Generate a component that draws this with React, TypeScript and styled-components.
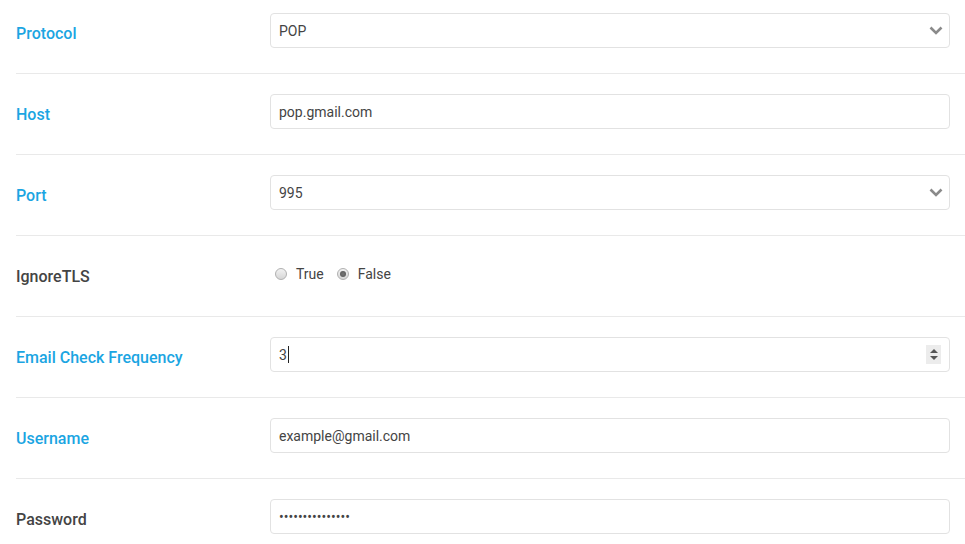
import React from "react";
import { styled, createGlobalStyle } from "styled-components";

const GlobalStyle = createGlobalStyle`
  html, body {
    margin: 0;
    padding: 0;
    background: #fff;
    font-family: Roboto, "Liberation Sans", Arial, sans-serif;
  }
`;

const Form = styled.form`
  padding-left: 16px;
  width: 949px;
`;

const Row = styled.div`
  display: grid;
  grid-template-columns: 254px 1fr;
  align-items: center;
  padding: 20px 15px 25px 0;
  border-bottom: 1px solid #e9e9e9;

  &:first-child {
    padding-top: 13px;
  }
  &:last-child {
    border-bottom: none;
  }
`;

const Label = styled.label<{ $required?: boolean }>`
  font-size: 16px;
  font-weight: 500;
  color: ${(p) => (p.$required ? "#1ba5e2" : "#444")};
  padding-top: 5px;
`;

const Field = styled.div`
  position: relative;
  height: 35px;
`;

const TextInput = styled.input`
  box-sizing: border-box;
  width: 100%;
  height: 35px;
  padding: 0 8px;
  border: 1px solid #e2e2e2;
  border-radius: 4px;
  font-family: Roboto, "Liberation Sans", Arial, sans-serif;
  font-size: 14px;
  color: #444;
  background: #fff;
  outline: none;
`;

const Select = styled.select`
  box-sizing: border-box;
  width: 100%;
  height: 35px;
  padding: 0 8px;
  border: 1px solid #e2e2e2;
  border-radius: 4px;
  font-family: Roboto, "Liberation Sans", Arial, sans-serif;
  font-size: 14px;
  color: #444;
  background: #fff;
  appearance: none;
  outline: none;
`;

const Chevron = styled.svg`
  position: absolute;
  right: 7px;
  top: 13px;
  pointer-events: none;
`;

const FakeInput = styled.div`
  box-sizing: border-box;
  display: flex;
  align-items: center;
  height: 35px;
  padding: 0 8px;
  border: 1px solid #e2e2e2;
  border-radius: 4px;
  font-size: 14px;
  color: #444;
`;

const Caret = styled.span`
  display: inline-block;
  width: 1px;
  height: 17px;
  background: #222;
  margin-left: 1px;
`;

const Spinner = styled.div`
  position: absolute;
  right: 9px;
  top: 8px;
  width: 15px;
  height: 19px;
  background: #ececec;
  display: flex;
  flex-direction: column;
  align-items: center;
  justify-content: center;
  gap: 3px;
`;

const Triangle = styled.span<{ $down?: boolean }>`
  width: 0;
  height: 0;
  border-left: 4px solid transparent;
  border-right: 4px solid transparent;
  ${(p) =>
    p.$down ? "border-top: 4px solid #555;" : "border-bottom: 4px solid #555;"}
`;

const RadioGroup = styled.div`
  display: flex;
  align-items: center;
  height: 35px;
  padding-left: 5px;
  gap: 13px;
`;

const RadioOption = styled.label`
  display: flex;
  align-items: center;
  gap: 9px;
  font-size: 14px;
  color: #444;
`;

const RadioDot = styled.span<{ $checked?: boolean }>`
  box-sizing: border-box;
  width: 12px;
  height: 12px;
  border-radius: 50%;
  border: 1px solid #b0b0b0;
  background: linear-gradient(#f2f2f2, #d6d6d6);
  display: flex;
  align-items: center;
  justify-content: center;

  &::after {
    content: "";
    width: 6px;
    height: 6px;
    border-radius: 50%;
    background: ${(p) => (p.$checked ? "radial-gradient(#777, #555)" : "transparent")};
  }
`;

const ChevronIcon = () => (
  <Chevron width="14" height="9" viewBox="0 0 14 9">
    <path d="M1.5 1.5 L7 7 L12.5 1.5" fill="none" stroke="#8a8a8a" strokeWidth="2.6" />
  </Chevron>
);

export default function App() {
  return (
    <>
      <GlobalStyle />
      <Form>
        <Row>
          <Label $required>Protocol</Label>
          <Field>
            <Select defaultValue="POP">
              <option>POP</option>
              <option>IMAP</option>
            </Select>
            <ChevronIcon />
          </Field>
        </Row>
        <Row>
          <Label $required>Host</Label>
          <Field>
            <TextInput type="text" defaultValue="pop.gmail.com" />
          </Field>
        </Row>
        <Row>
          <Label $required>Port</Label>
          <Field>
            <Select defaultValue="995">
              <option>995</option>
              <option>110</option>
            </Select>
            <ChevronIcon />
          </Field>
        </Row>
        <Row>
          <Label>IgnoreTLS</Label>
          <RadioGroup>
            <RadioOption>
              <RadioDot />
              True
            </RadioOption>
            <RadioOption>
              <RadioDot $checked />
              False
            </RadioOption>
          </RadioGroup>
        </Row>
        <Row>
          <Label $required>Email Check Frequency</Label>
          <Field>
            <FakeInput>
              3<Caret />
            </FakeInput>
            <Spinner>
              <Triangle />
              <Triangle $down />
            </Spinner>
          </Field>
        </Row>
        <Row>
          <Label $required>Username</Label>
          <Field>
            <TextInput type="text" defaultValue="example@gmail.com" />
          </Field>
        </Row>
        <Row>
          <Label>Password</Label>
          <Field>
            <TextInput type="password" defaultValue="abcdefghijklmno" />
          </Field>
        </Row>
      </Form>
    </>
  );
}
